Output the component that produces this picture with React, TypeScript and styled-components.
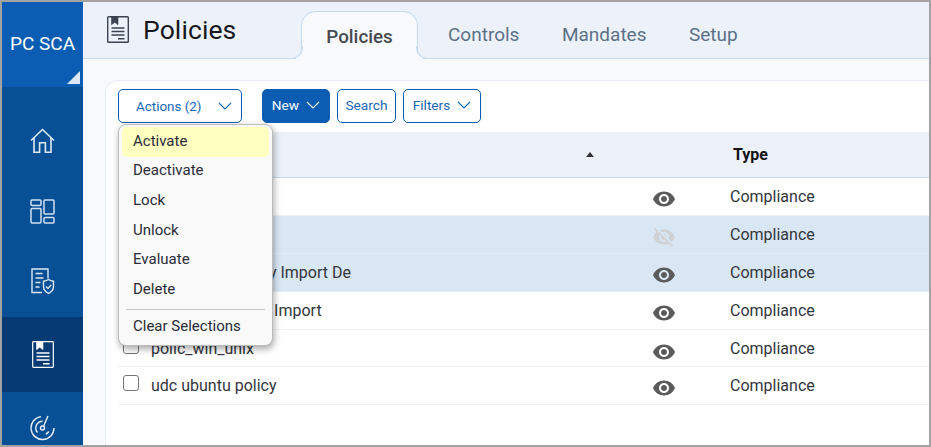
import React from "react";
import styled, { createGlobalStyle } from "styled-components";

const Global = createGlobalStyle`
  html, body { margin: 0; padding: 0; background: #fff; }
  * { box-sizing: border-box; }
  body { font-family: Roboto, "Liberation Sans", sans-serif; }
`;

const Frame = styled.div`
  width: 931px;
  height: 447px;
  border: 2px solid #a3a3a3;
  display: flex;
  overflow: hidden;
  background: #f7f9fd;
`;

const Sidebar = styled.aside`
  width: 81px;
  flex: none;
  background: #085096;
  display: flex;
  flex-direction: column;
`;

const Brand = styled.div`
  position: relative;
  height: 85px;
  flex: none;
  background: #0a5db3;
  color: #fff;
  font-size: 19px;
  display: flex;
  justify-content: center;
  padding-top: 31px;
  line-height: 22px;
`;

const Corner = styled.svg`
  position: absolute;
  right: 3px;
  bottom: 3px;
`;

const Nav = styled.nav`
  padding-top: 19px;
  display: flex;
  flex-direction: column;
`;

const NavItem = styled.div<{ $h: number; $active?: boolean }>`
  height: ${(p) => p.$h}px;
  flex: none;
  display: flex;
  align-items: center;
  justify-content: center;
  background: ${(p) => (p.$active ? "#063a73" : "transparent")};
`;

const Main = styled.main`
  flex: 1;
  min-width: 0;
  display: flex;
  flex-direction: column;
`;

const Header = styled.header`
  height: 57px;
  flex: none;
  background: #edf2fa;
  border-bottom: 1px solid #c5d9ef;
  padding-left: 24px;
  display: flex;
`;

const TitleBlock = styled.div`
  width: 194px;
  flex: none;
  display: flex;
  align-items: center;
  gap: 14px;
  height: 55px;
`;

const Title = styled.h1`
  margin: 0;
  font-size: 26.5px;
  font-weight: 400;
  color: #16181d;
  line-height: 30px;
  letter-spacing: 0.1px;
`;

const Tabs = styled.div`
  display: flex;
  align-items: flex-end;
  height: 57px;
`;

const ActiveTab = styled.div`
  position: relative;
  width: 117px;
  height: 48px;
  margin-right: 8.75px;
  background: #f7f9fd;
  border: 1px solid #c5d9ef;
  border-bottom: none;
  border-radius: 15px 15px 0 0;
  font-size: 18.8px;
  font-weight: 500;
  color: #46494f;
  display: flex;
  align-items: center;
  justify-content: center;
  padding-top: 2px;
  &::before, &::after {
    content: "";
    position: absolute;
    bottom: 0;
    width: 12px;
    height: 12px;
    border-bottom: 1px solid #c5d9ef;
  }
  &::before {
    left: -12px;
    border-right: 1px solid #c5d9ef;
    border-bottom-right-radius: 12px;
    box-shadow: 6px 6px 0 0 #f7f9fd;
  }
  &::after {
    right: -12px;
    border-left: 1px solid #c5d9ef;
    border-bottom-left-radius: 12px;
    box-shadow: -6px 6px 0 0 #f7f9fd;
  }
`;

const TabLink = styled.div`
  height: 47px;
  padding: 0 21.25px 2px;
  font-size: 19px;
  color: #5c7087;
  display: flex;
  align-items: center;
`;

const Content = styled.div`
  flex: 1;
  min-height: 0;
  padding: 21px 0 0 22px;
  display: flex;
`;

const Card = styled.section`
  position: relative;
  flex: 1;
  min-width: 0;
  background: #fff;
  border-top: 1px solid #e8ecf4;
  border-left: 1px solid #e8ecf4;
  border-top-left-radius: 13px;
`;

const Toolbar = styled.div`
  height: 51px;
  padding: 8px 0 0 12px;
  display: flex;
  align-items: flex-start;
  gap: 7px;
`;

const Button = styled.button<{ $primary?: boolean; $w: number }>`
  height: 34px;
  width: ${(p) => p.$w}px;
  padding: 0 0 2px;
  border: 1px solid #0a5db3;
  border-radius: 5px;
  background: ${(p) => (p.$primary ? "#0a5db3" : "#fff")};
  color: ${(p) => (p.$primary ? "#fff" : "#1767b8")};
  font-family: inherit;
  font-size: 13.7px;
  font-weight: 400;
  display: flex;
  align-items: center;
  justify-content: center;
  gap: 7px;
`;

const ActionsButton = styled(Button)`
  margin-right: 13px;
  padding: 0 0 0 17px;
  justify-content: flex-start;
  gap: 17px;
  font-size: 13.4px;
`;

const Menu = styled.div`
  position: absolute;
  left: 12px;
  top: 43px;
  width: 155px;
  height: 222px;
  padding: 2px 3px 0;
  background: #f9f9f9;
  border: 1px solid #bcbcbc;
  border-radius: 8px;
  box-shadow: 1px 3px 7px rgba(0, 0, 0, 0.35);
  z-index: 5;
`;

const MenuItem = styled.div<{ $hover?: boolean }>`
  height: 29.6px;
  padding: 0 0 2px 11px;
  display: flex;
  align-items: center;
  font-size: 15px;
  color: #2a2b38;
  border-radius: 5px;
  background: ${(p) => (p.$hover ? "#ffffc0" : "transparent")};
`;

const MenuDivider = styled.div`
  height: 1px;
  margin: 4px 4px 3px;
  background: #c9c9c9;
`;

const Table = styled.div`
  margin-left: 12px;
`;

const HeadRow = styled.div`
  height: 46px;
  background: #ecf1f9;
  border-bottom: 1px solid #c5d9ef;
  display: grid;
  grid-template-columns: 33px 489px 48px 1fr;
  align-items: center;
  font-size: 16px;
  font-weight: 700;
  color: #111;
`;

const HeadName = styled.div`
  grid-column: 2;
  display: flex;
  justify-content: space-between;
  align-items: center;
  padding-right: 46px;
`;

const SortArrow = styled.span`
  width: 0;
  height: 0;
  border-left: 4.5px solid transparent;
  border-right: 4.5px solid transparent;
  border-bottom: 5px solid #333;
`;

const HeadType = styled.div`
  grid-column: 4;
  padding-left: 45px;
`;

const Row = styled.div<{ $selected?: boolean; $h: number; $nudge?: boolean }>`
  height: ${(p) => p.$h}px;
  padding-top: ${(p) => (p.$nudge ? 2 : 0)}px;
  background: ${(p) => (p.$selected ? "#d9e6f4" : "#fff")};
  border-bottom: 1px solid ${(p) => (p.$selected ? "#e3ecf6" : "#eef0f3")};
  display: grid;
  grid-template-columns: 33px 489px 48px 1fr;
  align-items: center;
  color: #33363c;
`;

const Check = styled.span`
  width: 16px;
  height: 16px;
  margin: 0 0 6px 5px;
  border: 1.5px solid #767676;
  border-radius: 3px;
  background: #fff;
`;

const Name = styled.div`
  font-size: 16px;
  white-space: nowrap;
  padding-bottom: 1px;
`;

const EyeCell = styled.div`
  display: flex;
  justify-content: center;
  padding-top: 5px;
`;

const TypeCell = styled.div`
  padding-left: 42px;
  font-size: 16px;
  padding-bottom: 1px;
`;

const Chevron = ({ w = 14 }: { w?: number }) => (
  <svg width={w} height={8} viewBox="0 0 14 8" fill="none" stroke="currentColor" strokeWidth="1.1">
    <path d="M1 1l6 6 6-6" />
  </svg>
);

const EYE =
  "M12 4.5C7 4.5 2.73 7.61 1 12c1.73 4.39 6 7.5 11 7.5s9.27-3.11 11-7.5c-1.73-4.39-6-7.5-11-7.5zM12 17c-2.76 0-5-2.24-5-5s2.24-5 5-5 5 2.24 5 5-2.24 5-5 5zm0-8c-1.66 0-3 1.34-3 3s1.34 3 3 3 3-1.34 3-3-1.34-3-3-3z";
const EYE_OFF =
  "M12 7c2.76 0 5 2.24 5 5 0 .65-.13 1.26-.36 1.83l2.92 2.92c1.51-1.26 2.7-2.89 3.43-4.75-1.73-4.39-6-7.5-11-7.5-1.4 0-2.74.25-3.98.7l2.16 2.16C10.74 7.13 11.35 7 12 7zM2 4.27l2.28 2.28.46.46C3.08 8.3 1.78 10.02 1 12c1.73 4.39 6 7.5 11 7.5 1.55 0 3.03-.3 4.38-.84l.42.42L19.73 22 21 20.73 3.27 3 2 4.27zM7.53 9.8l1.55 1.55c-.05.21-.08.43-.08.65 0 1.66 1.34 3 3 3 .22 0 .44-.03.65-.08l1.55 1.55c-.67.33-1.41.53-2.2.53-2.76 0-5-2.24-5-5 0-.79.2-1.53.53-2.2zm4.31-.78l3.15 3.15.02-.16c0-1.66-1.34-3-3-3l-.17.01z";

const Eye = ({ off }: { off?: boolean }) => (
  <svg width="24" height="24" viewBox="0 0 24 24" fill={off ? "#cfd1d3" : "#5b5b5b"}>
    <path d={off ? EYE_OFF : EYE} />
  </svg>
);

const HomeIcon = () => (
  <svg width="25" height="26" viewBox="0 0 25 26" fill="none" stroke="#dfeaf5" strokeWidth="1.6">
    <path d="M1 12.5 12.5 1.5 24 12.5" />
    <path d="M4 10v14.2h5.6v-9.4h5.8v9.4H21V10" />
  </svg>
);

const DashIcon = () => (
  <svg width="25" height="25" viewBox="0 0 25 25" fill="none" stroke="#cfe0f1" strokeWidth="1.5">
    <rect x="1" y="1" width="10" height="5.5" rx="1" />
    <rect x="1" y="9.5" width="10" height="14.5" rx="1" />
    <rect x="14" y="1" width="10" height="14" rx="1" />
    <rect x="14" y="18.5" width="10" height="5.5" rx="1" />
  </svg>
);

const ReportIcon = () => (
  <svg width="24" height="27" viewBox="0 0 24 27" fill="none" stroke="#dbe7f3" strokeWidth="1.4">
    <path d="M11 24.500H1V1h16v9.500" />
    <path d="M4.500 5.500h7M4.500 10h8M4.500 14.500h5M4.500 19h4" />
    <path d="M17.500 11.500c1.700 1.300 3.200 1.600 5 1.700v5c0 3.300-2.100 5.700-5 7.300-2.900-1.600-5-4-5-7.300v-5c1.800-.1 3.300-.4 5-1.700z" fill="#085096" />
    <path d="M15 18.500l2 2 3.200-3.600" />
  </svg>
);

const DocIcon = ({ color, stroke = 1.2 }: { color: string; stroke?: number }) => (
  <svg width="22" height="27" viewBox="0 0 22 27" fill="none" stroke={color} strokeWidth={stroke}>
    <rect x="0.7" y="0.7" width="20.6" height="25.6" rx="0.8" />
    <path d="M4.500 0.700h6.500v8l-3.250-2.400-3.250 2.400z" fill={color} strokeWidth="0.6" />
    <path d="M4.500 12h13M4.500 15.500h13M4.500 19h13M11 22.800h6.500" strokeWidth="1.5" />
  </svg>
);

const RadarIcon = () => (
  <svg width="26" height="27" viewBox="0 0 26 27" fill="none" stroke="#e6eff8" strokeWidth="1.4">
    <path d="M24 13A11.500 11.500 0 1 1 11 1.600" />
    <path d="M7.500 17.500A6.800 6.800 0 0 1 12.500 6.200" />
    <circle cx="12.500" cy="13" r="2" />
    <path d="M13.500 11.200L18 1" />
    <path d="M18.800 16.500a7 7 0 0 1-3 2.600" />
  </svg>
);

const rows = [
  { name: "cis ubuntu", off: false, selected: false, h: 38 },
  { name: "cis windows", off: true, selected: true, h: 38 },
  { name: "udc ubuntu policy Import De", off: false, selected: true, h: 38 },
  { name: "polic_win_unix_2 Import", off: false, selected: false, h: 38 },
  { name: "polic_win_unix", off: false, selected: false, h: 37, nudge: true },
  { name: "udc ubuntu policy", off: false, selected: false, h: 38 },
];

const menuItems = ["Activate", "Deactivate", "Lock", "Unlock", "Evaluate", "Delete"];

export default function App() {
  return (
    <>
      <Global />
      <Frame>
        <Sidebar>
          <Brand>
            PC SCA
            <Corner width="13" height="13" viewBox="0 0 13 13">
              <path d="M13 0v13H0z" fill="#dce8f5" />
            </Corner>
          </Brand>
          <Nav>
            <NavItem $h={70}><HomeIcon /></NavItem>
            <NavItem $h={70}><DashIcon /></NavItem>
            <NavItem $h={71}><ReportIcon /></NavItem>
            <NavItem $h={75} $active><DocIcon color="#fff" /></NavItem>
            <NavItem $h={72}><RadarIcon /></NavItem>
          </Nav>
        </Sidebar>
        <Main>
          <Header>
            <TitleBlock>
              <DocIcon color="#3b4250" stroke={1.4} />
              <Title>Policies</Title>
            </TitleBlock>
            <Tabs>
              <ActiveTab>Policies</ActiveTab>
              <TabLink>Controls</TabLink>
              <TabLink>Mandates</TabLink>
              <TabLink>Setup</TabLink>
            </Tabs>
          </Header>
          <Content>
            <Card>
              <Toolbar>
                <ActionsButton $w={124}>
                  Actions (2)
                  <Chevron />
                </ActionsButton>
                <Button $primary $w={68}>New <Chevron /></Button>
                <Button $w={59}>Search</Button>
                <Button $w={78}>Filters <Chevron /></Button>
              </Toolbar>
              <Menu>
                {menuItems.map((m, i) => (
                  <MenuItem key={m} $hover={i === 0}>{m}</MenuItem>
                ))}
                <MenuDivider />
                <MenuItem>Clear Selections</MenuItem>
              </Menu>
              <Table>
                <HeadRow>
                  <HeadName>Name<SortArrow /></HeadName>
                  <HeadType>Type</HeadType>
                </HeadRow>
                {rows.map((r) => (
                  <Row key={r.name} $selected={r.selected} $h={r.h} $nudge={r.nudge}>
                    <Check />
                    <Name>{r.name}</Name>
                    <EyeCell><Eye off={r.off} /></EyeCell>
                    <TypeCell>Compliance</TypeCell>
                  </Row>
                ))}
              </Table>
            </Card>
          </Content>
        </Main>
      </Frame>
    </>
  );
}
